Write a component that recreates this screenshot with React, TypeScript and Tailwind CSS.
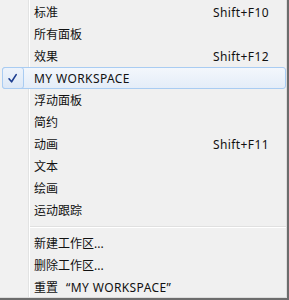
import React from 'react';

type Item =
  | { kind: 'item'; label: string; shortcut?: string; checked?: boolean; latin?: boolean }
  | { kind: 'sep' };

const ITEMS: Item[] = [
  { kind: 'item', label: '标准', shortcut: 'Shift+F10' },
  { kind: 'item', label: '所有面板' },
  { kind: 'item', label: '效果', shortcut: 'Shift+F12' },
  { kind: 'item', label: 'MY WORKSPACE', checked: true, latin: true },
  { kind: 'item', label: '浮动面板' },
  { kind: 'item', label: '简约' },
  { kind: 'item', label: '动画', shortcut: 'Shift+F11' },
  { kind: 'item', label: '文本' },
  { kind: 'item', label: '绘画' },
  { kind: 'item', label: '运动跟踪' },
  { kind: 'sep' },
  { kind: 'item', label: '新建工作区...' },
  { kind: 'item', label: '删除工作区...' },
  { kind: 'item', label: '重置' },
];

function CheckMark() {
  return (
    <svg width="20" height="20" viewBox="0 0 20 20" className="block">
      <path d="M6 10.8 L8.6 13.8 L13.2 6.6" fill="none" stroke="#1b3c8f" strokeWidth="1.6" strokeLinecap="round" strokeLinejoin="round" />
    </svg>
  );
}

export default function App() {
  return (
    <div className="w-[289px] h-[300px] border-r-2 border-b-2 border-[#6c6c6c] bg-[#f0f0f0]">
      <div
        className="h-full border-r border-b border-[#dcdcdc] pt-px text-[12px] text-[#111] bg-[linear-gradient(to_right,#f1f1f1_28px,#e2e3e3_28px,#e2e3e3_29px,#ffffff_29px,#ffffff_30px,#f0f0f0_30px)]"
        style={{ fontFamily: '"Noto Sans", "Noto Sans CJK SC", sans-serif' }}
      >
        {ITEMS.map((it, i) =>
          it.kind === 'sep' ? (
            <div key={i} className="h-[11px] pt-[5px] ml-[30px]">
              <div className="h-px bg-[#e0e0e0]" />
              <div className="h-px bg-white" />
            </div>
          ) : it.checked ? (
            <div
              key={i}
              className="h-[22px] ml-[2px] flex items-center rounded-[3px] border border-[#a9ccf2] bg-[linear-gradient(to_bottom,#f3f7fc,#e4edf8)]"
            >
              <div className="w-[22px] h-[22px] -ml-px -mt-px -mb-px shrink-0 rounded-[3px] border border-[#a9ccf2] bg-[linear-gradient(to_bottom,#edf3fb,#dde8f6)] flex items-center justify-center">
                <CheckMark />
              </div>
              <span className="ml-[10px] pt-[2px] leading-none tracking-[0.4px]">{it.label}</span>
            </div>
          ) : (
            <div key={i} className="h-[22px] flex items-center pt-[2px] pl-[34px] pr-[17px]">
              <span className="leading-none">{it.label}</span>
              {it.label === '重置' && (
                <span className="ml-[8px] leading-none tracking-[0.4px]">“MY WORKSPACE”</span>
              )}
              {it.shortcut && <span className="ml-auto leading-none tracking-[0.4px]">{it.shortcut}</span>}
            </div>
          )
        )}
      </div>
    </div>
  );
}
